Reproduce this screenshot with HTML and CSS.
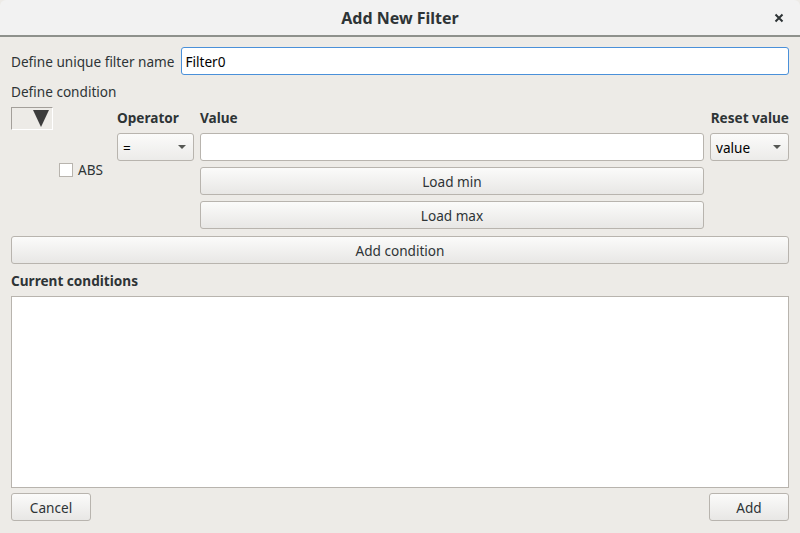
FILE: index.html
```html
<!DOCTYPE html>
<html>
<head>
<meta charset="utf-8">
<link rel="stylesheet" href="styles.css">
</head>
<body>
<div class="dialog">
  <div class="titlebar">
    <span class="title">Add New Filter</span>
    <span class="close">
      <svg width="10" height="10" viewBox="0 0 10 10"><path d="M1.5 1.5 L8.5 8.5 M8.5 1.5 L1.5 8.5" stroke="#2e3436" stroke-width="2"/></svg>
    </span>
  </div>
  <div class="content">
    <div class="name-row">
      <label class="label">Define unique filter name</label>
      <div class="input focused">Filter0</div>
    </div>
    <div class="section-label first">Define condition</div>
    <div class="cond-grid">
      <div class="left-col">
        <div class="arrow-box">
          <svg width="16" height="17" viewBox="0 0 16 17"><path d="M0 0 H16 L8 17 Z" fill="#3c3c3c"/></svg>
        </div>
        <div class="abs">
          <span class="checkbox"></span>
          <span class="abs-label">ABS</span>
        </div>
      </div>
      <div class="head">Operator</div>
      <div class="head">Value</div>
      <div class="head right">Reset value</div>
      <div class="combo"><span>=</span><span class="caret"></span></div>
      <div class="input"></div>
      <div class="combo"><span>value</span><span class="caret"></span></div>
      <div class="spacer"></div>
      <div class="button">Load min</div>
      <div class="spacer"></div>
      <div class="spacer"></div>
      <div class="button">Load max</div>
      <div class="spacer"></div>
    </div>
    <div class="button wide">Add condition</div>
    <div class="section-label bold">Current conditions</div>
    <div class="list"></div>
    <div class="footer">
      <div class="button small">Cancel</div>
      <div class="button small">Add</div>
    </div>
  </div>
</div>
</body>
</html>
```
FILE: styles.css
```css
html, body {
  margin: 0;
  padding: 0;
}
body {
  width: 800px;
  height: 533px;
  background: #edebe7;
  font-family: "Noto Sans", "DejaVu Sans", sans-serif;
  font-size: 13.6px;
  color: #2e3436;
  overflow: hidden;
}
.dialog {
  display: flex;
  flex-direction: column;
  height: 533px;
}
.titlebar {
  box-sizing: border-box;
  background: #f2f2f2;
  border-bottom: 2px solid #8e918c;
  border-radius: 6px 6px 0 0;
  display: flex;
  align-items: center;
  justify-content: center;
  position: relative;
  flex: none;
  height: 37px;
}
.title {
  font-weight: bold;
  font-size: 16px;
  color: #2e3436;
}
.close {
  position: absolute;
  right: 16px;
  top: 13px;
  width: 10px;
  height: 10px;
  display: flex;
}
.content {
  padding: 10px 11px 12px 11px;
  display: flex;
  flex-direction: column;
  flex: 1;
}
.name-row {
  display: flex;
  align-items: center;
  gap: 7px;
}
.name-row .input {
  flex: 1;
}
.label {
  white-space: nowrap;
}
.input {
  height: 28px;
  box-sizing: border-box;
  background: #ffffff;
  border: 1px solid #b8b4ae;
  border-radius: 3px;
  padding: 0 3px;
  display: flex;
  align-items: center;
  color: #000;
}
.input.focused {
  border-color: #4a90d9;
}
.section-label {
  height: 18px;
  line-height: 18px;
}
.section-label.first {
  margin-top: 8px;
}
.section-label.bold {
  font-weight: bold;
  margin-top: 8px;
}
.cond-grid {
  margin-top: 6px;
  display: grid;
  grid-template-columns: 100px 77px 504px 79px;
  grid-template-rows: 20px 28px 28px 28px;
  column-gap: 6px;
  row-gap: 6px;
}
.left-col {
  grid-row: 1 / span 4;
  display: flex;
  flex-direction: column;
}
.arrow-box {
  width: 42px;
  height: 23px;
  flex: none;
  box-sizing: border-box;
  border-top: 1px solid #a39f9a;
  border-left: 1px solid #a39f9a;
  border-right: 1px solid #ffffff;
  border-bottom: 1px solid #ffffff;
  display: flex;
  align-items: center;
  justify-content: flex-end;
  padding-right: 3px;
}
.abs {
  margin-top: 30px;
  margin-left: 48px;
  display: flex;
  align-items: center;
  gap: 5px;
}
.checkbox {
  width: 14px;
  height: 14px;
  box-sizing: border-box;
  background: #ffffff;
  border: 1px solid #b8b4ae;
}
.head {
  font-weight: bold;
  display: flex;
  align-items: center;
  white-space: nowrap;
  color: #2e3436;
}
.head.right {
  justify-content: flex-end;
}
.combo {
  height: 28px;
  box-sizing: border-box;
  border: 1px solid #b8b4ae;
  border-radius: 3px;
  background: linear-gradient(#fbfbfa, #ecebe9);
  display: flex;
  align-items: center;
  justify-content: space-between;
  padding: 0 7px 0 5px;
  color: #000;
}
.caret {
  width: 0;
  height: 0;
  border-left: 4px solid transparent;
  border-right: 4px solid transparent;
  border-top: 4px solid #555753;
}
.button {
  height: 28px;
  box-sizing: border-box;
  border: 1px solid #b8b4ae;
  border-radius: 3px;
  background: linear-gradient(#fbfbfa, #e8e7e5);
  display: flex;
  align-items: center;
  justify-content: center;
  color: #2e3436;
}
.button.wide {
  margin-top: 7px;
}
.list {
  margin-top: 6px;
  height: 192px;
  box-sizing: border-box;
  background: #ffffff;
  border: 1px solid #b8b4ae;
}
.footer {
  margin-top: 5px;
  display: flex;
  justify-content: space-between;
}
.button.small {
  width: 80px;
}
```
